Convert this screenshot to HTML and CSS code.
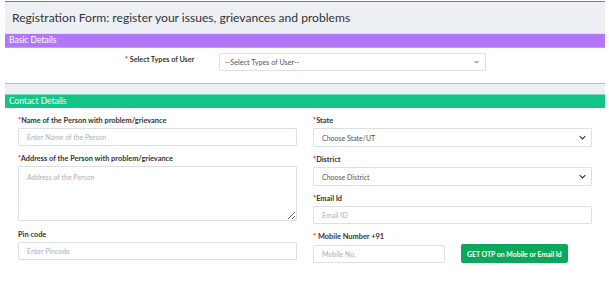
FILE: index.html
```html
<!DOCTYPE html>
<html lang="en">
<head>
<meta charset="UTF-8">
<meta name="viewport" content="width=device-width, initial-scale=1.0">
<title>Registration Form</title>
<link rel="stylesheet" href="styles.css">
</head>
<body>
<div class="page">
  <div class="page-head">
    <h1>Registration Form: register your issues, grievances and problems</h1>
  </div>

  <section class="panel">
    <div class="panel-title purple">Basic Details</div>
    <div class="basic-row">
      <label class="inline-label"><span class="req">*</span> Select Types of User</label>
      <div class="select-wrap user-type">
        <select>
          <option>--Select Types of User--</option>
        </select>
        <svg class="chev" viewBox="0 0 10 6"><path d="M1 1l4 4 4-4" /></svg>
      </div>
    </div>
  </section>

  <div class="gap"></div>

  <section class="panel">
    <div class="panel-title green">Contact Details</div>
    <div class="contact-grid">
      <div class="col">
        <div class="field">
          <label><span class="req">*</span>Name of the Person with problem/grievance</label>
          <input type="text" placeholder="Enter Name of the Person">
        </div>
        <div class="field">
          <label><span class="req">*</span>Address of the Person with problem/grievance</label>
          <textarea placeholder="Address of the Person"></textarea>
        </div>
        <div class="field pin">
          <label>Pin code</label>
          <input type="text" placeholder="Enter Pincode">
        </div>
      </div>

      <div class="col">
        <div class="field">
          <label><span class="req">*</span>State</label>
          <div class="select-wrap">
            <select><option>Choose State/UT</option></select>
            <svg class="chev big" viewBox="0 0 10 6"><path d="M1 1l4 4 4-4" /></svg>
          </div>
        </div>
        <div class="field">
          <label><span class="req">*</span>District</label>
          <div class="select-wrap">
            <select><option>Choose District</option></select>
            <svg class="chev big" viewBox="0 0 10 6"><path d="M1 1l4 4 4-4" /></svg>
          </div>
        </div>
        <div class="field">
          <label><span class="req">*</span>Email Id</label>
          <input type="text" placeholder="Email ID">
        </div>
        <div class="field">
          <label><span class="req">*</span> Mobile Number +91</label>
          <div class="mobile-row">
            <input type="text" class="mobile" placeholder="Mobile No.">
            <button type="button" class="otp-btn">GET OTP on Mobile or Email Id</button>
          </div>
        </div>
      </div>
    </div>
  </section>
</div>
</body>
</html>
```

FILE: styles.css
```css
body {
  margin: 0;
  background: #fff;
  font-family: Lato, "Open Sans", sans-serif;
  color: #333;
}

.page {
  width: 600px;
  margin: 1px 0 0 5px;
  border-top: 1px solid #6e7e9c;
}

.page-head {
  height: 31px;
  background: #eceff3;
  border-bottom: 1px solid #e2e5ec;
  display: flex;
  align-items: center;
  padding-left: 7px;
}

.page-head h1 {
  margin: 0;
  font-size: 12.1px;
  font-weight: normal;
  color: #333;
}

.panel-title {
  height: 13px;
  line-height: 13px;
  padding-left: 4px;
  font-size: 8.5px;
  color: #fff;
}

.panel-title.purple {
  background: #b277f8;
  border-bottom: 1px solid #c39af6;
}

.panel-title.green {
  background: #15c386;
  border-top: 1px solid #7adcb6;
}

.basic-row {
  height: 36px;
  display: flex;
  align-items: flex-start;
  padding-top: 5px;
  box-sizing: border-box;
  border-bottom: 1px solid #c8a9f4;
}

.inline-label {
  width: 214px;
  margin-top: 2px;
  padding-left: 120px;
  box-sizing: border-box;
  font-size: 7.2px;
  font-weight: bold;
  white-space: nowrap;
}

.req {
  color: #e3151f;
}

.gap {
  height: 10px;
  background: #eceff3;
}

.contact-grid {
  display: grid;
  grid-template-columns: 279px 279px;
  column-gap: 16px;
  padding: 7px 13px 0 13px;
}

.field {
  margin-bottom: 7px;
}

.field label {
  display: block;
  height: 12px;
  line-height: 12px;
  margin-bottom: 1px;
  font-size: 7.4px;
  font-weight: bold;
  white-space: nowrap;
}

input,
select,
textarea,
button {
  font-family: inherit;
}

input,
textarea,
select {
  display: block;
  width: 100%;
  box-sizing: border-box;
  height: 18px;
  border: 1px solid #dde0e6;
  border-radius: 1px;
  background: #fff;
  font-size: 7px;
  color: #555;
  padding: 0 8px;
  outline: none;
}

select {
  appearance: none;
  -webkit-appearance: none;
  height: 19px;
}

textarea {
  height: 55px;
  padding: 6px 8px;
  resize: vertical;
}

input::placeholder,
textarea::placeholder {
  color: #acb0b6;
}

.field.pin {
  margin-top: 8px;
}

.select-wrap {
  position: relative;
}

.select-wrap.user-type {
  width: 267px;
}

.select-wrap.user-type select {
  padding-left: 5px;
  height: 18px;
  font-size: 7.2px;
}

.chev {
  position: absolute;
  right: 7px;
  top: 7px;
  width: 5px;
  height: 4px;
  fill: none;
  stroke: #333;
  stroke-width: 1.6;
}

.chev.big {
  width: 7px;
  height: 5px;
  right: 6px;
}

.mobile-row {
  display: flex;
  align-items: center;
  gap: 16px;
}

.mobile-row .mobile {
  width: 132px;
}

.otp-btn {
  height: 19px;
  padding: 0 6px;
  border: none;
  border-radius: 2px;
  background: #0aa95a;
  color: #fff;
  font-size: 6.9px;
  font-weight: bold;
  white-space: nowrap;
}
```
